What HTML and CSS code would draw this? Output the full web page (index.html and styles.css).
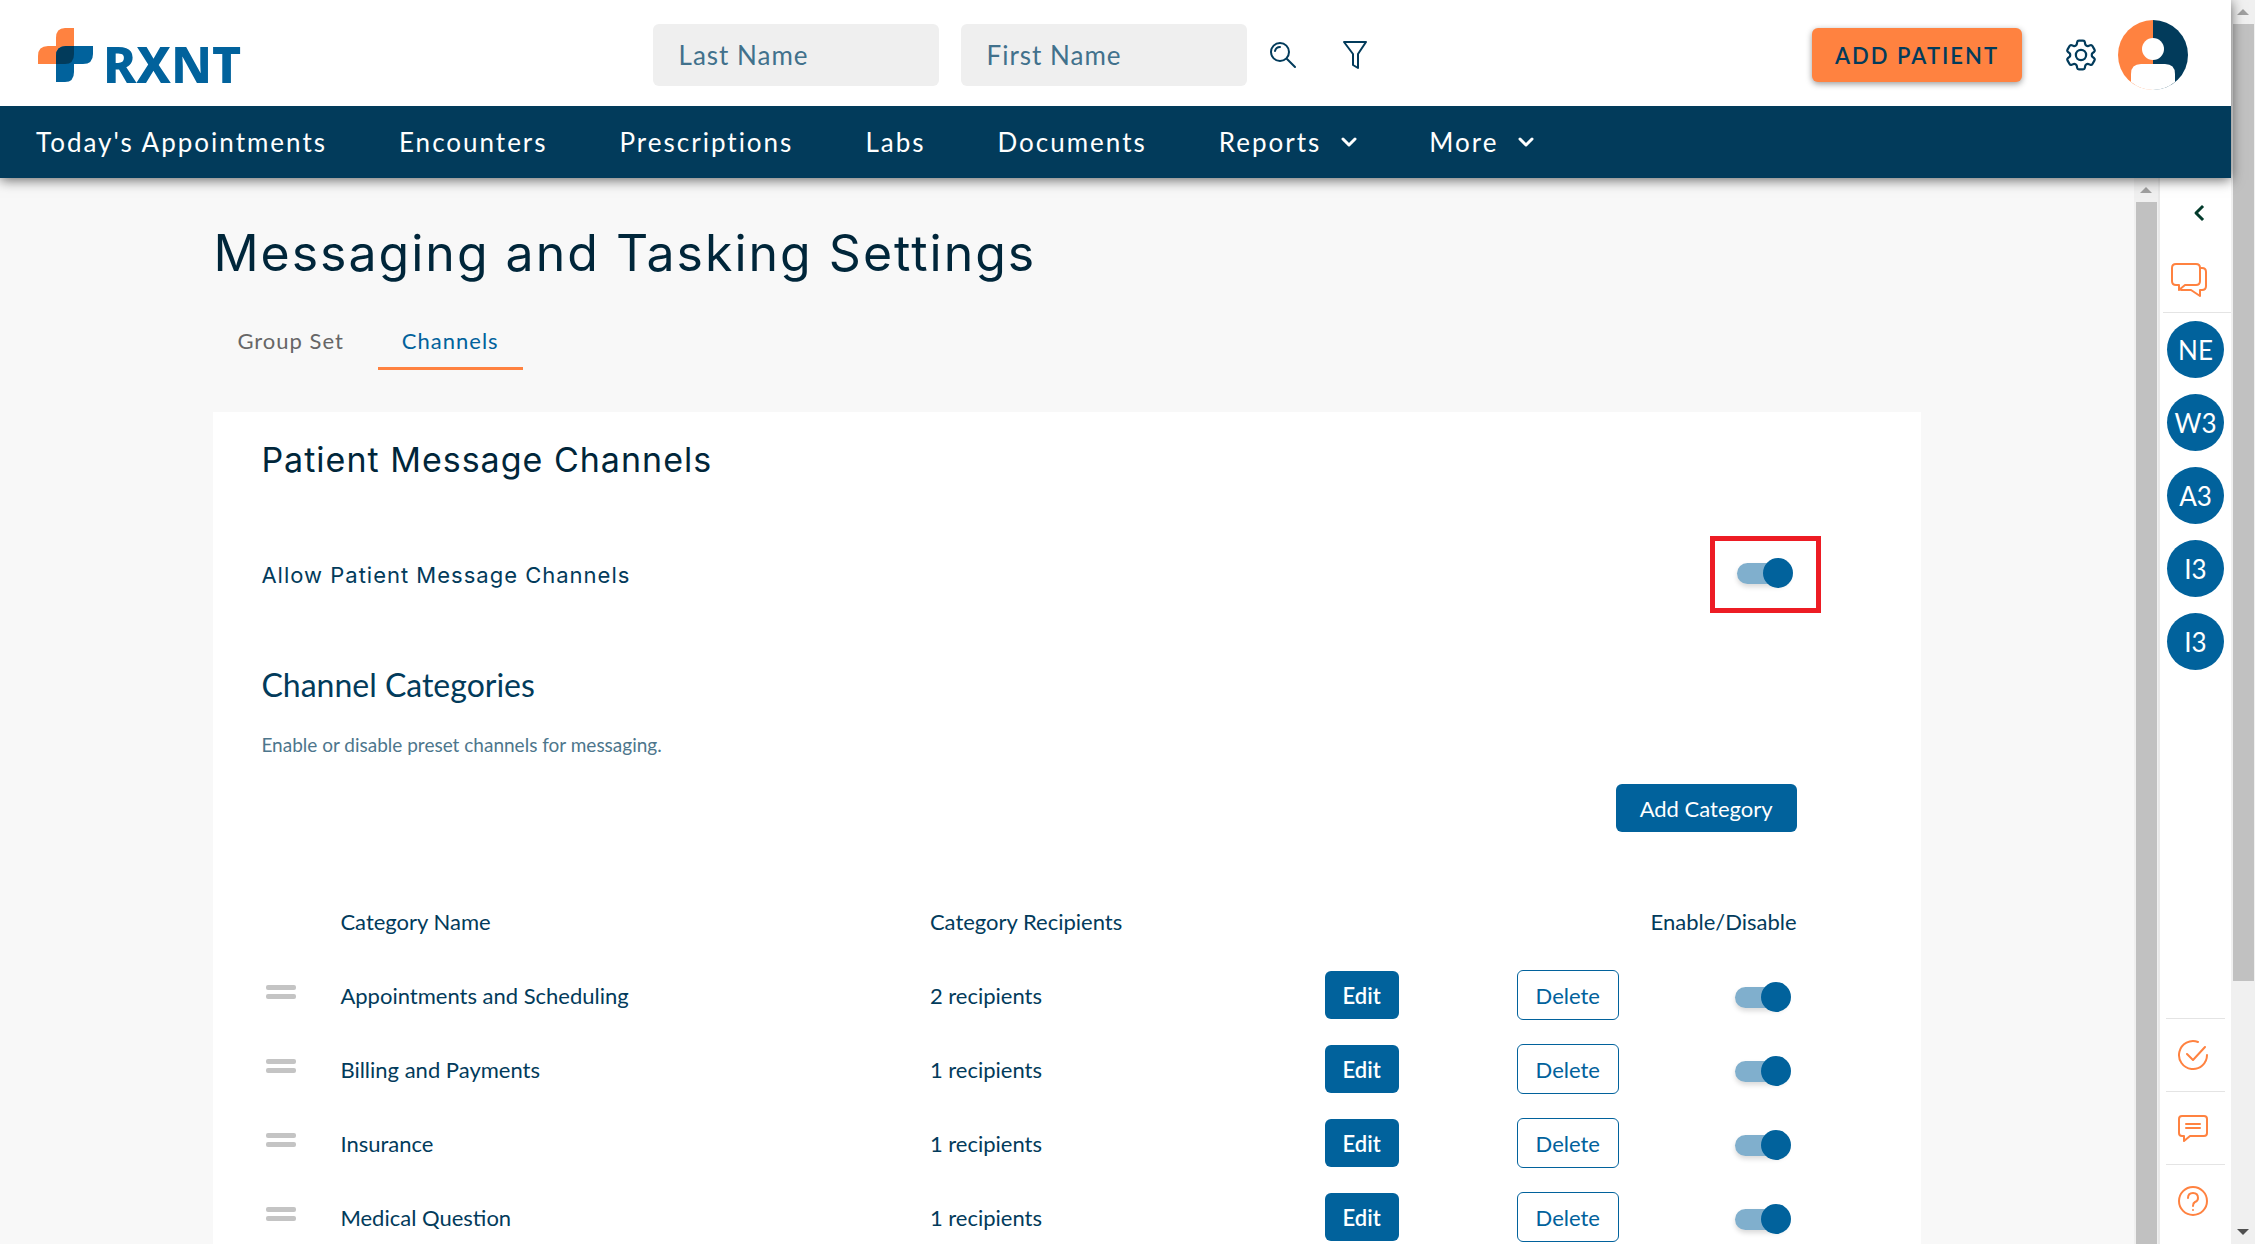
FILE: index.html
```html
<!DOCTYPE html>
<html lang="en">
  <head>
    <meta charset="UTF-8" />
    <meta name="viewport" content="width=device-width, initial-scale=1.0" />
    <title>Messaging and Tasking Settings</title>
    <link rel="stylesheet" href="styles.css">
  </head>
  <body>
    <div class="app">
      <header class="header">
        <div class="topbar">
          <a href="#home" class="logo" aria-label="RXNT home">
            <svg class="logo-mark" viewBox="0 0 55 54" aria-hidden="true">
              <path fill="#ff8240" d="M27 0h9v36H0v-8q0-10 10-10h8V10Q18 0 27 0z" />
              <path fill="#01629c" d="M28 18h27v8q0 10-10 10h-9v8q0 10-9 10h-9V28q0-10 10-10z" />
              <path fill="#023b5b" d="M28 18h8v8q0 10-9 10h-9v-8q0-10 10-10z" />
            </svg>
            <span>RXNT</span>
          </a>
          <form class="search">
            <input type="text" placeholder="Last Name" aria-label="Last Name" />
            <input type="text" placeholder="First Name" aria-label="First Name" />
            <button type="button" class="icon-btn" aria-label="Search">
              <svg width="28" height="28" viewBox="0 0 28 28">
                <circle cx="11" cy="11" r="9" />
                <path d="M18 18l8 8M6 10q1-4 5-4" />
              </svg>
            </button>
            <button type="button" class="icon-btn" aria-label="Filter">
              <svg width="28" height="28" viewBox="0 0 28 28">
                <path d="M3 1h22l-8 12v14l-5-3V13z" />
              </svg>
            </button>
          </form>
          <div class="account">
            <button type="button" class="add-patient">ADD PATIENT</button>
            <button type="button" class="icon-btn gear" aria-label="Settings">
              <svg width="32" height="32" viewBox="2 2 20 20">
                <path d="M9.594 3.94c.09-.542.56-.94 1.11-.94h2.593c.55 0 1.02.398 1.11.94l.213 1.281c.063.374.313.686.645.87.074.04.147.083.22.127.325.196.72.257 1.075.124l1.217-.456a1.125 1.125 0 0 1 1.37.49l1.296 2.247a1.125 1.125 0 0 1-.26 1.431l-1.003.827c-.293.241-.438.613-.43.992a7.723 7.723 0 0 1 0 .255c-.008.378.137.75.43.991l1.004.827c.424.35.534.955.26 1.43l-1.298 2.247a1.125 1.125 0 0 1-1.369.491l-1.217-.456c-.355-.133-.75-.072-1.076.124a6.47 6.47 0 0 1-.22.128c-.331.183-.581.495-.644.869l-.213 1.281c-.09.543-.56.94-1.11.94h-2.594c-.55 0-1.019-.398-1.11-.94l-.213-1.281c-.062-.374-.312-.686-.644-.87a6.52 6.52 0 0 1-.22-.127c-.325-.196-.72-.257-1.076-.124l-1.217.456a1.125 1.125 0 0 1-1.369-.49l-1.297-2.247a1.125 1.125 0 0 1 .26-1.431l1.004-.827c.292-.24.437-.613.43-.991a6.932 6.932 0 0 1 0-.255c.007-.38-.138-.751-.43-.992l-1.004-.827a1.125 1.125 0 0 1-.26-1.43l1.297-2.247a1.125 1.125 0 0 1 1.37-.491l1.216.456c.356.133.751.072 1.076-.124.072-.044.146-.086.22-.128.332-.183.582-.495.644-.869l.214-1.28Z" />
                <circle cx="12" cy="12" r="3.2" />
              </svg>
            </button>
            <button type="button" class="avatar" aria-label="Profile">
              <svg viewBox="0 0 70 70">
                <path fill="#ff8240" d="M35 0a35 35 0 0 0 0 70z" />
                <path fill="#023b5b" d="M35 0a35 35 0 0 1 0 70z" />
                <circle fill="#fff" cx="35" cy="29" r="11" />
                <path fill="#fff" d="M13 62v-8q0-10 10-10h24q10 0 10 10v8q-10 8-22 8t-22-8z" />
              </svg>
            </button>
          </div>
        </div>
        <nav class="nav">
          <a href="#appointments">Today's Appointments</a>
          <a href="#encounters">Encounters</a>
          <a href="#prescriptions">Prescriptions</a>
          <a href="#labs">Labs</a>
          <a href="#documents">Documents</a>
          <a href="#reports">Reports
            <svg width="16" height="10" viewBox="0 0 16 10"><path d="M2 2l6 6 6-6" /></svg>
          </a>
          <a href="#more">More
            <svg width="16" height="10" viewBox="0 0 16 10"><path d="M2 2l6 6 6-6" /></svg>
          </a>
        </nav>
      </header>

      <div class="workspace">
        <main class="main">
          <div class="content">
            <h1>Messaging and Tasking Settings</h1>
            <div class="tabs">
              <a href="#group-set">Group Set</a>
              <a href="#channels" class="active">Channels</a>
            </div>
            <section class="card">
              <h2>Patient Message Channels</h2>
              <div class="allow-row">
                <label for="allow">Allow Patient Message Channels</label>
                <div class="highlight">
                  <input type="checkbox" class="toggle" id="allow" checked />
                </div>
              </div>
              <h3>Channel Categories</h3>
              <p class="hint">Enable or disable preset channels for messaging.</p>
              <div class="actions">
                <button type="button" class="btn">Add Category</button>
              </div>
              <table class="categories">
                <thead>
                  <tr>
                    <th class="col-drag"></th>
                    <th class="col-name">Category Name</th>
                    <th>Category Recipients</th>
                    <th class="col-edit"></th>
                    <th class="col-delete"></th>
                    <th class="col-toggle">Enable/Disable</th>
                  </tr>
                </thead>
                <tbody>
                  <tr>
                    <td><span class="drag"></span></td>
                    <td>Appointments and Scheduling</td>
                    <td>2 recipients</td>
                    <td><button type="button" class="btn small">Edit</button></td>
                    <td><button type="button" class="btn outline">Delete</button></td>
                    <td class="col-toggle"><input type="checkbox" class="toggle" aria-label="Appointments and Scheduling" checked /></td>
                  </tr>
                  <tr>
                    <td><span class="drag"></span></td>
                    <td>Billing and Payments</td>
                    <td>1 recipients</td>
                    <td><button type="button" class="btn small">Edit</button></td>
                    <td><button type="button" class="btn outline">Delete</button></td>
                    <td class="col-toggle"><input type="checkbox" class="toggle" aria-label="Billing and Payments" checked /></td>
                  </tr>
                  <tr>
                    <td><span class="drag"></span></td>
                    <td>Insurance</td>
                    <td>1 recipients</td>
                    <td><button type="button" class="btn small">Edit</button></td>
                    <td><button type="button" class="btn outline">Delete</button></td>
                    <td class="col-toggle"><input type="checkbox" class="toggle" aria-label="Insurance" checked /></td>
                  </tr>
                  <tr>
                    <td><span class="drag"></span></td>
                    <td>Medical Question</td>
                    <td>1 recipients</td>
                    <td><button type="button" class="btn small">Edit</button></td>
                    <td><button type="button" class="btn outline">Delete</button></td>
                    <td class="col-toggle"><input type="checkbox" class="toggle" aria-label="Medical Question" checked /></td>
                  </tr>
                </tbody>
              </table>
            </section>
          </div>
        </main>

        <div class="scrollbar" aria-hidden="true">
          <span class="arrow up"></span>
          <span class="thumb"></span>
        </div>

        <aside class="sidebar">
          <button type="button" class="collapse" aria-label="Expand panel">
            <svg width="12" height="18" viewBox="0 0 12 18"><path d="M9 3L3 9l6 6" /></svg>
          </button>
          <button type="button" class="side-icon chats" aria-label="Chats">
            <svg width="36" height="36" viewBox="0 0 36 36">
              <path d="M5 2h20q4 0 4 4v13q0 4-4 4H14l-6 5v-5H5q-4 0-4-4V6q0-4 4-4z" />
              <path d="M29 6h2q4 0 4 4v14q0 4-4 4h-2v6l-9-6H10" />
            </svg>
          </button>
          <div class="people">
            <button type="button">NE</button>
            <button type="button">W3</button>
            <button type="button">A3</button>
            <button type="button">I3</button>
            <button type="button">I3</button>
          </div>
          <div class="side-tools">
            <button type="button" class="side-icon" aria-label="Tasks">
              <svg width="32" height="32" viewBox="0 0 32 32">
                <path d="M21 3A14 14 0 1 0 30 16M10 15l6 6L28 8" />
              </svg>
            </button>
            <button type="button" class="side-icon" aria-label="Messages">
              <svg width="32" height="32" viewBox="0 0 32 32">
                <path d="M5 4h22q3 0 3 3v14q0 3-3 3H13l-6 5v-5H5q-3 0-3-3V7q0-3 3-3zM9 12h14M9 16h14" />
              </svg>
            </button>
            <button type="button" class="side-icon" aria-label="Help">
              <svg width="32" height="32" viewBox="0 0 32 32">
                <circle cx="16" cy="16" r="14" />
                <path d="M11 13q0-5 5-5t5 5q0 3-3 4-2 1-2 4M16 25v0" />
              </svg>
            </button>
          </div>
        </aside>
      </div>
    </div>

    <div class="scrollbar" aria-hidden="true">
      <span class="arrow up"></span>
      <span class="thumb page-thumb"></span>
      <span class="rest"></span>
      <span class="arrow down"></span>
    </div>
  </body>
</html>
```
FILE: styles.css
```css
* {
  box-sizing: border-box;
}
body {
  display: flex;
  height: 100vh;
  margin: 0;
  overflow: hidden;
  font-family: Lato, sans-serif;
  font-size: 22px;
  color: #023b5b;
  background: #f8f8f8;
}
button,
input {
  font-family: inherit;
  font-size: inherit;
}
button {
  padding: 0;
  border: none;
  background: none;
  cursor: pointer;
}
a {
  color: inherit;
  text-decoration: none;
}
svg {
  display: block;
  fill: none;
  stroke-linecap: round;
  stroke-linejoin: round;
}
.app {
  flex: 1;
  min-width: 0;
  display: flex;
  flex-direction: column;
}

/* header */
.header {
  position: relative;
  z-index: 2;
  box-shadow: 0 2px 12px rgba(0, 0, 0, 0.6);
}
.topbar {
  display: grid;
  grid-template-columns: 3fr auto 4fr;
  align-items: center;
  height: 106px;
  padding: 4px 43px 0 38px;
  background: #fff;
}
.logo {
  display: flex;
  align-items: flex-end;
  gap: 10px;
  font-family: "Noto Sans", sans-serif;
  font-size: 50px;
  font-weight: 800;
  line-height: 36px;
  color: #01629c;
}
.logo-mark {
  width: 55px;
  height: 54px;
}
.search {
  display: flex;
  align-items: center;
  gap: 22px;
}
.search input {
  width: 286px;
  height: 62px;
  padding: 0 26px;
  border: none;
  border-radius: 6px;
  background: #efefef;
  font-size: 26px;
  letter-spacing: 1px;
}
.search input::placeholder {
  color: #41718c;
  opacity: 1;
}
.icon-btn svg {
  stroke: #023b5b;
  stroke-width: 2;
}
.gear svg {
  stroke-width: 1.4;
}
.search .icon-btn + .icon-btn {
  margin-left: 22px;
}
.account {
  display: flex;
  justify-content: flex-end;
  align-items: center;
}
.add-patient {
  height: 54px;
  padding: 0 23px;
  border-radius: 6px;
  background: #ff8240;
  color: #023b5b;
  font-weight: 600;
  letter-spacing: 2px;
  box-shadow: 0 2px 6px rgba(0, 0, 0, 0.4);
}
.account .icon-btn {
  margin: 0 21px 0 43px;
}
.avatar {
  width: 70px;
  height: 70px;
}
.nav {
  display: flex;
  align-items: center;
  gap: 72px;
  height: 72px;
  padding: 0 36px;
  background: #023b5b;
  color: #fff;
  font-size: 26px;
  letter-spacing: 2px;
  white-space: nowrap;
}
.nav a {
  display: flex;
  align-items: center;
  gap: 20px;
}
.nav svg {
  stroke: #fff;
  stroke-width: 3;
}

/* page content */
.workspace {
  flex: 1;
  min-height: 0;
  display: flex;
}
.main {
  flex: 1;
  min-width: 0;
  overflow: hidden;
}
.content {
  width: 80%;
  margin: 40px auto 0;
}
h1,
h2,
h3,
p {
  margin: 0;
  font-weight: 400;
}
h1,
h2,
.allow-row {
  font-family: Inter, sans-serif;
}
h1 {
  font-size: 50px;
  line-height: 70px;
  letter-spacing: 2px;
  color: #00263a;
}
.tabs {
  display: flex;
  gap: 10px;
  margin: 27px 0 42px;
  letter-spacing: 1px;
}
.tabs a {
  padding: 10px 24px;
  line-height: 32px;
  border-bottom: 3px solid transparent;
  color: #666;
}
.tabs .active {
  color: #01629c;
  border-color: #ff8240;
}
.card {
  padding: 24px 124px 40px 48px;
  background: #fff;
}
h2 {
  font-size: 34px;
  line-height: 48px;
  letter-spacing: 1px;
  color: #00263a;
}
.allow-row {
  display: flex;
  justify-content: space-between;
  align-items: center;
  margin: 52px 0;
  letter-spacing: 1px;
}
.highlight {
  display: flex;
  margin-right: -24px;
  padding: 22px 27px 24px 22px;
  border: 5px solid #ed1c24;
}
h3 {
  font-size: 32px;
  line-height: 40px;
}
.hint {
  margin-top: 28px;
  font-size: 19px;
  line-height: 24px;
  color: #4d768c;
}
.actions {
  display: flex;
  justify-content: flex-end;
  margin: 27px 0 52px;
}
.btn {
  height: 48px;
  padding: 0 24px;
  border-radius: 6px;
  background: #01629c;
  color: #fff;
}
.btn.small {
  padding: 0 18px;
  font-weight: 600;
}
.btn.outline {
  height: 50px;
  padding: 0 18px;
  border: 1px solid #01629c;
  background: #fff;
  color: #01629c;
}
.categories {
  width: 100%;
  table-layout: fixed;
  border-collapse: collapse;
}
.categories th,
.categories td {
  height: 74px;
  padding: 0;
  font-weight: 400;
  text-align: left;
  white-space: nowrap;
}
.categories .col-drag {
  width: 79px;
}
.categories .col-name {
  width: 38.4%;
}
.categories .col-edit {
  width: 192px;
}
.categories .col-delete {
  width: 133px;
}
.categories .col-toggle {
  width: 147px;
  text-align: right;
}
.drag {
  display: block;
  width: 30px;
  height: 14px;
  margin: 0 5px 6px;
}
.drag::before,
.drag::after {
  content: "";
  display: block;
  height: 5px;
  border-radius: 2px;
  background: #c4c4c4;
}
.drag::after {
  margin-top: 4px;
}
.toggle {
  appearance: none;
  position: relative;
  width: 52px;
  height: 21px;
  margin: 0;
  border-radius: 11px;
  background: #80afcd;
  box-shadow: 0 3px 5px rgba(0, 0, 0, 0.15);
  vertical-align: middle;
  cursor: pointer;
}
td .toggle {
  margin-right: 10px;
}
.toggle::before {
  content: "";
  position: absolute;
  top: -5px;
  left: -4px;
  width: 30px;
  height: 30px;
  border-radius: 50%;
  background: #01629c;
}
.toggle:checked::before {
  left: 26px;
}

/* chat sidebar */
.sidebar {
  width: 73px;
  display: flex;
  flex-direction: column;
  align-items: center;
  padding: 26px 0 7px;
  border-left: 2px solid #e8e8e8;
  background: #fff;
}
.collapse {
  margin-left: 6px;
}
.collapse svg {
  stroke: #023b2b;
  stroke-width: 3;
  stroke-linecap: square;
}
.side-icon svg {
  stroke: #ff8240;
  stroke-width: 2;
}
.chats {
  align-self: stretch;
  margin-left: 3px;
  padding: 40px 8px 14px;
  border-bottom: 1px solid #e4e4e4;
}
.people {
  display: flex;
  flex-direction: column;
  gap: 16px;
  margin-top: 8px;
}
.people button {
  width: 57px;
  height: 57px;
  border-radius: 50%;
  background: #01629c;
  color: #fff;
  font-size: 26px;
}
.side-tools {
  margin-top: auto;
}
.side-tools .side-icon {
  display: flex;
  justify-content: center;
  align-items: center;
  width: 59px;
  height: 73px;
  padding-right: 6px;
  border-top: 1px solid #e4e4e4;
}

/* scrollbars */
.scrollbar {
  display: flex;
  flex-direction: column;
  width: 24px;
  background: #f0f0f0;
}
.arrow {
  height: 24px;
  display: flex;
  justify-content: center;
  align-items: center;
}
.arrow::before {
  content: "";
  border: solid transparent;
  border-width: 0 6px 6px;
  border-bottom-color: #a0a0a0;
}
.arrow.down::before {
  border-width: 6px 6px 0;
  border-top-color: #505050;
}
.thumb {
  flex: 1;
  margin: 0 1px 0 2px;
  background: #c1c1c1;
}
.page-thumb {
  flex: 4;
}
.rest {
  flex: 1;
}
```
